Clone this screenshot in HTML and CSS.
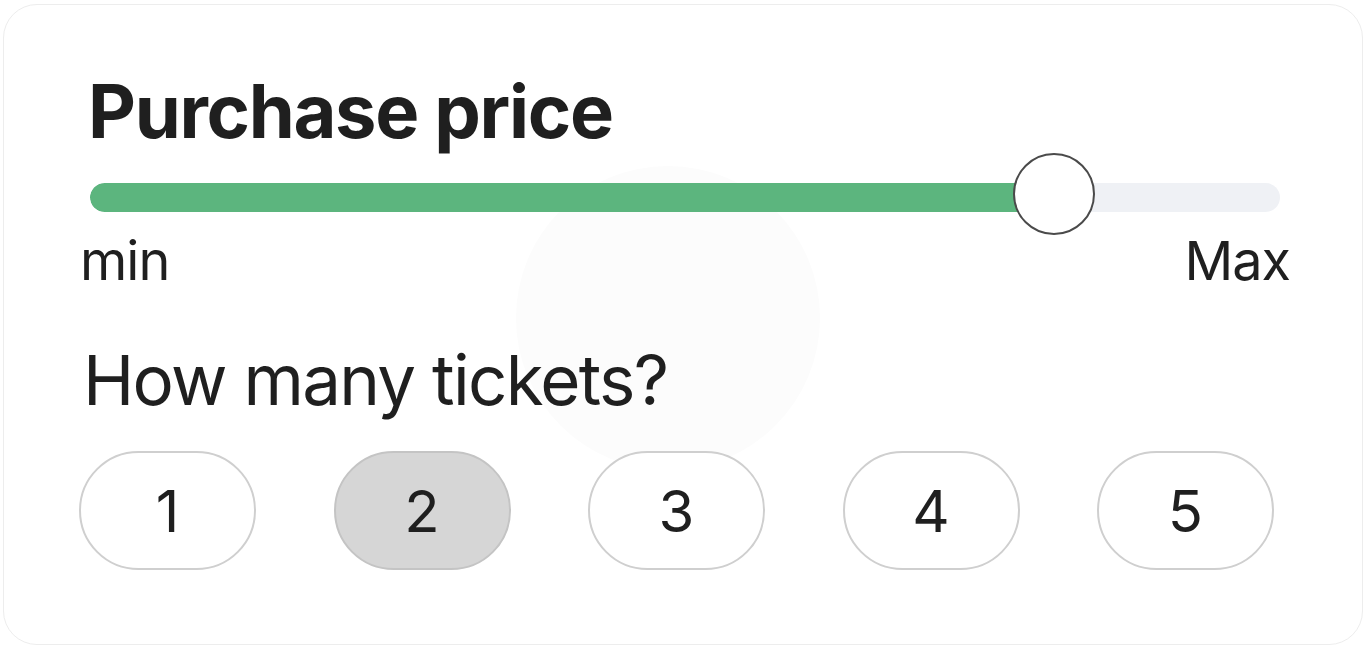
FILE: index.html
```html
<!DOCTYPE html>
<html lang="en">
<head>
<meta charset="utf-8">
<title>Purchase price</title>
<link rel="stylesheet" href="styles.css">
</head>
<body>
<div class="card">
  <div class="watermark"></div>
  <h1 class="title">Purchase price</h1>
  <div class="slider">
    <div class="track"><div class="fill" style="width:81%"></div></div>
    <div class="thumb" style="left:81%"></div>
  </div>
  <div class="labels"><span>min</span><span>Max</span></div>
  <h2 class="question">How many tickets?</h2>
  <div class="options">
    <button class="opt">1</button>
    <button class="opt selected">2</button>
    <button class="opt">3</button>
    <button class="opt">4</button>
    <button class="opt">5</button>
  </div>
</div>
</body>
</html>
```

FILE: styles.css
```css
html, body {
  margin: 0;
  padding: 0;
  background: #ffffff;
}
body {
  font-family: Inter, "Liberation Sans", sans-serif;
  color: #1f1f1f;
}
.card {
  position: relative;
  isolation: isolate;
  box-sizing: border-box;
  margin: 4px 4px 0 3px;
  height: 641px;
  border: 1px solid #ededed;
  border-radius: 34px;
  background: #ffffff;
  padding: 66px 72px 0 76px;
  display: flex;
  flex-direction: column;
}
.watermark {
  position: absolute;
  z-index: -1;
  left: 512px;
  top: 161px;
  width: 304px;
  height: 304px;
  border-radius: 50%;
  background: #fcfcfc;
}
.title {
  margin: 0;
  font-size: 74px;
  line-height: 80px;
  font-weight: 700;
  letter-spacing: -1.3px;
  padding-left: 8px;
}
.slider {
  position: relative;
  margin: 32px 10px 0 10px;
}
.track {
  height: 29px;
  border-radius: 15px;
  background: #eff1f5;
  overflow: hidden;
}
.fill {
  height: 100%;
  background: #5cb57e;
  border-radius: 15px 0 0 15px;
}
.thumb {
  position: absolute;
  top: -30px;
  width: 78px;
  height: 78px;
  margin-left: -41px;
  border: 2px solid #4a4a4a;
  border-radius: 50%;
  background: #ffffff;
}
.labels {
  margin-top: 19px;
  display: flex;
  justify-content: space-between;
  font-size: 54px;
  line-height: 60px;
  font-weight: 400;
  letter-spacing: -1px;
}
.question {
  margin: 51px 0 0 3px;
  font-size: 69px;
  line-height: 76px;
  font-weight: 400;
  letter-spacing: -1.7px;
}
.options {
  margin: 33px 16px 0 -1px;
  display: flex;
  justify-content: space-between;
}
.opt {
  box-sizing: border-box;
  width: 177px;
  height: 119px;
  border: 2px solid #cfcfcf;
  border-radius: 60px;
  background: #ffffff;
  font-family: Inter, "Liberation Sans", sans-serif;
  font-size: 58px;
  font-weight: 400;
  color: #1f1f1f;
  padding: 0;
}
.opt.selected {
  background: #d6d6d6;
  border-color: #c4c4c4;
}
```
